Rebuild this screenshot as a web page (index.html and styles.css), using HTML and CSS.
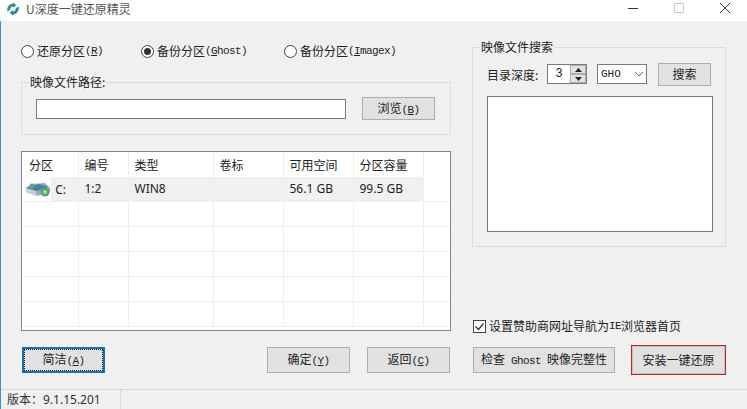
FILE: index.html
```html
<!DOCTYPE html>
<html>
<head>
    <title>U深度一键还原精灵</title>
    <meta charset="utf-8">
    <link rel="stylesheet" href="styles.css">
</head>
<body>
<div class="window">
    <div class="titlebar">
        <svg class="logo" width="14" height="14" viewBox="0 0 14 14">
            <path d="M7 0.5L10.5 3.2 7 5.8V4.4A2.7 2.7 0 0 0 4.4 7.6L1.6 9.6A6 6 0 0 1 7 1.6Z" fill="#2f9470"/>
            <path d="M7 13.5L3.5 10.8 7 8.2V9.6A2.7 2.7 0 0 0 9.6 6.4L12.4 4.4A6 6 0 0 1 7 12.4Z" fill="#2b80b5"/>
        </svg>
        <span class="title">U深度一键还原精灵</span>
        <div class="winbtns">
            <svg width="12" height="12" viewBox="0 0 12 12"><path d="M1 6.5H11" stroke="#333" fill="none"/></svg>
            <svg width="12" height="12" viewBox="0 0 12 12"><path d="M1.5 1.5H10.5V10.5H1.5Z" stroke="#ccc" fill="none"/></svg>
            <svg width="12" height="12" viewBox="0 0 12 12"><path d="M1 1L11 11M11 1L1 11" stroke="#333" fill="none"/></svg>
        </div>
    </div>

    <div class="content">
        <div class="left">
            <div class="radios">
                <label class="opt opt1"><span class="radio"></span>还原分区<span class="en">(<u>R</u>)</span></label>
                <label class="opt opt2"><span class="radio on"></span>备份分区<span class="en">(<u>G</u>host)</span></label>
                <label class="opt"><span class="radio"></span>备份分区<span class="en">(<u>I</u>magex)</span></label>
            </div>

            <div class="group path-group">
                <span class="legend">映像文件路径:</span>
                <div class="path-row">
                    <div class="field path-field"></div>
                    <button class="btn browse">浏览<span class="en">(<u>B</u>)</span></button>
                </div>
            </div>

            <div class="listview">
                <table>
                    <tr class="head">
                        <th class="c1">分区</th><th class="c2">编号</th><th class="c3">类型</th><th class="c4">卷标</th><th class="c5">可用空间</th><th class="c6">分区容量</th><th class="c7"></th>
                    </tr>
                    <tr class="sel">
                        <td class="drive">
                            <svg width="26" height="18" viewBox="0 0 26 18">
                                <path d="M1 8L6 4 20 3 25 8 25 12 12 16 1 12Z" fill="#8fa9bf"/>
                                <path d="M1 8L14 4 23 7 11 11Z" fill="#4f7f9f"/>
                                <path d="M1 8L11 11 12 16 1 12Z" fill="#c3cfd9"/>
                                <circle cx="7" cy="6" r="2.5" fill="#55a888"/>
                                <circle cx="20" cy="12" r="4.5" fill="#4aa66c"/>
                                <circle cx="20" cy="12" r="2" fill="#a8dcb0"/>
                            </svg>
                            <span class="drive-name">C:</span>
                        </td>
                        <td>1:2</td><td>WIN8</td><td></td><td>56.1 GB</td><td>99.5 GB</td><td class="blank"></td>
                    </tr>
                    <tr><td></td><td></td><td></td><td></td><td></td><td></td><td></td></tr>
                    <tr><td></td><td></td><td></td><td></td><td></td><td></td><td></td></tr>
                    <tr><td></td><td></td><td></td><td></td><td></td><td></td><td></td></tr>
                    <tr><td></td><td></td><td></td><td></td><td></td><td></td><td></td></tr>
                    <tr><td></td><td></td><td></td><td></td><td></td><td></td><td></td></tr>
                </table>
            </div>

            <div class="left-btns">
                <button class="btn wide focused">简洁<span class="en">(<u>A</u>)</span></button>
                <button class="btn wide push">确定<span class="en">(<u>Y</u>)</span></button>
                <button class="btn wide">返回<span class="en">(<u>C</u>)</span></button>
            </div>
        </div>

        <div class="right">
            <div class="group search-group">
                <span class="legend">映像文件搜索</span>
                <div class="search-row">
                    <span class="depth-label">目录深度:</span>
                    <div class="spinner">
                        <span class="spin-val">3</span>
                        <div class="spin-btns">
                            <span class="spin-btn"><svg width="7" height="4" viewBox="0 0 7 4"><path d="M3.5 0L7 4H0Z" fill="#222"/></svg></span>
                            <span class="spin-btn"><svg width="7" height="4" viewBox="0 0 7 4"><path d="M3.5 4L7 0H0Z" fill="#222"/></svg></span>
                        </div>
                    </div>
                    <div class="combo">
                        <span class="combo-val">GHO</span>
                        <svg width="10" height="6" viewBox="0 0 10 6"><path d="M1 1L5 5 9 1" stroke="#666" fill="none"/></svg>
                    </div>
                    <button class="btn search">搜索</button>
                </div>
                <div class="field results"></div>
            </div>

            <label class="check-row">
                <span class="check"><svg width="11" height="11" viewBox="0 0 11 11"><path d="M1.5 5.5L4.5 8.5 9.5 2.5" stroke="#333" stroke-width="1.2" fill="none"/></svg></span>
                设置赞助商网址导航为<span class="en">IE</span>浏览器首页
            </label>

            <div class="right-btns">
                <button class="btn verify">检查<span class="en sp"> Ghost </span>映像完整性</button>
                <button class="btn install">安装一键还原</button>
            </div>
        </div>
    </div>

    <div class="statusbar">
        <span class="version">版本：9.1.15.201</span>
    </div>
</div>
</body>
</html>
```

FILE: styles.css
```css
html, body {
    margin: 0;
    padding: 0;
}
body {
    width: 747px;
    height: 409px;
    overflow: hidden;
    font-family: "Noto Sans CJK SC", sans-serif;
    font-size: 12px;
    color: #222;
}
u {
    text-underline-offset: 1px;
}
.en {
    font-family: "Liberation Mono", monospace;
    font-size: 11px;
    letter-spacing: -0.6px;
}
.sp {
    white-space: pre;
}
.window {
    display: flex;
    flex-direction: column;
    height: 409px;
    background: #f0f0f0;
    border-left: 1px solid #3c8fd0;
    box-sizing: border-box;
}

/* title bar */
.titlebar {
    display: flex;
    align-items: center;
    height: 21px;
    flex: none;
    background: #fff;
    margin-left: -1px;
    padding: 0 0 4px 6px;
    box-sizing: border-box;
}
.logo {
    margin-right: 6px;
}
.title {
    color: #555;
    line-height: 16px;
    font-size: 12px;
}
.winbtns {
    display: flex;
    gap: 34px;
    margin-left: auto;
    margin-right: 16px;
    align-self: flex-start;
    margin-top: 2px;
}

/* main area */
.content {
    display: flex;
    flex: 1;
    gap: 21px;
    padding-left: 20px;
}
.left {
    width: 430px;
    display: flex;
    flex-direction: column;
}
.right {
    width: 254px;
    display: flex;
    flex-direction: column;
}
.radios {
    display: flex;
    align-items: center;
    height: 20px;
    margin-top: 20px;
}
.opt {
    display: flex;
    align-items: center;
    line-height: 16px;
}
.opt1 {
    width: 120px;
}
.opt2 {
    width: 143px;
}
.radio {
    width: 11px;
    height: 11px;
    border: 1px solid #444;
    border-radius: 50%;
    background: #fff;
    margin-right: 3px;
    position: relative;
    flex: none;
}
.radio.on::after {
    content: "";
    position: absolute;
    left: 2px;
    top: 2px;
    width: 7px;
    height: 7px;
    border-radius: 50%;
    background: #333;
}

/* groups */
.group {
    position: relative;
    border: 1px solid #dcdcdc;
    box-sizing: border-box;
}
.legend {
    position: absolute;
    left: 7px;
    top: -9px;
    background: #f0f0f0;
    padding: 0 1px;
    line-height: 16px;
}
.path-group {
    margin-top: 21px;
    height: 53px;
}
.path-row {
    display: flex;
    align-items: center;
    gap: 16px;
    padding: 14px 0 0 14px;
}
.field {
    background: #fff;
    border: 1px solid #7a7a7a;
    box-sizing: border-box;
}
.path-field {
    width: 310px;
    height: 20px;
}

/* buttons */
.btn {
    font-family: "Noto Sans CJK SC", sans-serif;
    font-size: 12px;
    color: #222;
    background: #e1e1e1;
    border: 1px solid #adadad;
    box-sizing: border-box;
    padding: 0;
    line-height: 16px;
}
.browse {
    width: 73px;
    height: 23px;
}
.wide {
    width: 83px;
    height: 26px;
}
.focused {
    border: 2px solid #1c6fa8;
    outline: 1px dotted #111;
    outline-offset: -3px;
}
.left-btns {
    display: flex;
    gap: 17px;
    margin-top: 16px;
    margin-left: 1px;
}
.left-btns .push {
    margin-left: 145px;
}

/* partition list */
.listview {
    margin-top: 16px;
    height: 180px;
    background: #fff;
    border: 1px solid #828790;
    box-sizing: border-box;
    overflow: hidden;
}
table {
    border-collapse: collapse;
    table-layout: fixed;
    width: 428px;
}
th, td {
    padding: 0 0 0 6px;
    height: 25px;
    box-sizing: border-box;
    text-align: left;
    font-weight: normal;
    white-space: nowrap;
    overflow: hidden;
    border-right: 1px solid #eeeeee;
    border-bottom: 1px solid #eeeeee;
    font-family: "Noto Sans", "Noto Sans CJK SC", sans-serif;
    font-size: 12px;
}
th {
    border-bottom: none;
    font-family: "Noto Sans CJK SC", sans-serif;
}
th.c1 {
    padding-left: 7px;
}
.c1 { width: 56px; }
.c2 { width: 50px; }
.c3 { width: 85px; }
.c4 { width: 70px; }
.c5 { width: 70px; }
.c6 { width: 70px; }
.c7 { border-right: none; }
td:last-child {
    border-right: none;
}
.sel td {
    height: 24px;
    background: #f0f0f0;
    border-right-color: #f0f0f0;
}
.sel td.blank {
    background: #fff;
}
.sel td.drive {
    padding: 0;
    background: linear-gradient(to right, #fff 29px, #f0f0f0 29px);
}
.drive svg {
    vertical-align: middle;
    margin-left: 3px;
}
.drive-name {
    vertical-align: middle;
    margin-left: 1px;
}

/* search panel */
.search-group {
    margin-top: 26px;
    height: 200px;
}
.search-row {
    display: flex;
    align-items: center;
    padding: 14px 0 0 14px;
    height: 24px;
}
.depth-label {
    width: 60px;
}
.spinner {
    display: flex;
    width: 40px;
    height: 20px;
    background: #fff;
    border: 1px solid #7a7a7a;
    box-sizing: border-box;
}
.spin-val {
    width: 22px;
    text-align: center;
    font-family: "Liberation Sans", sans-serif;
    line-height: 17px;
}
.spin-btns {
    display: flex;
    flex-direction: column;
    flex: 1;
}
.spin-btn {
    flex: 1;
    display: flex;
    align-items: center;
    justify-content: center;
    background: #e1e1e1;
    border: 1px solid #adadad;
    box-sizing: border-box;
}
.combo {
    display: flex;
    align-items: center;
    justify-content: space-between;
    width: 50px;
    height: 20px;
    margin-left: 10px;
    padding: 0 2px 0 3px;
    background: #fff;
    border: 1px solid #7a7a7a;
    box-sizing: border-box;
}
.combo-val {
    font-family: "Liberation Mono", monospace;
    font-size: 11px;
}
.search {
    width: 53px;
    height: 23px;
    margin-left: 11px;
}
.results {
    width: 226px;
    height: 136px;
    margin: 10px 0 0 14px;
}
.check-row {
    display: flex;
    align-items: center;
    margin-top: 71px;
    margin-left: 1px;
    line-height: 16px;
    height: 16px;
}
.check {
    display: flex;
    width: 13px;
    height: 13px;
    border: 1px solid #444;
    box-sizing: border-box;
    background: #fff;
    margin-right: 3px;
    flex: none;
}
.right-btns {
    display: flex;
    align-items: center;
    gap: 16px;
    margin-top: 11px;
    margin-left: 1px;
}
.verify {
    width: 143px;
    height: 26px;
}
.install {
    width: 96px;
    height: 30px;
    border: 1px solid #c8202f;
    outline: 1px solid #b9c9b9;
    outline-offset: -2px;
}

/* status bar */
.statusbar {
    flex: none;
    height: 20px;
    border-top: 1px solid #d9d9d9;
    box-sizing: border-box;
    padding-left: 6px;
    line-height: 19px;
    color: #333;
    font-family: "Noto Sans", "Noto Sans CJK SC", sans-serif;
}
.version {
    display: inline-block;
    width: 113px;
    border-right: 1px solid #d9d9d9;
}
```
